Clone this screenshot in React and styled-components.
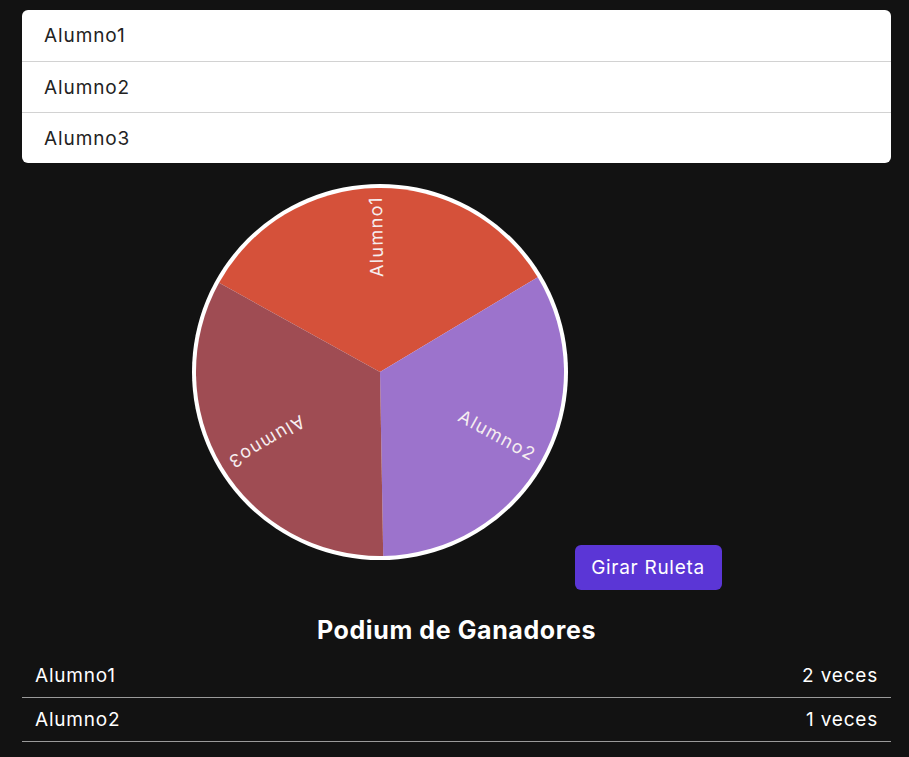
import React from 'react';
import styled, { createGlobalStyle } from 'styled-components';

const GlobalStyle = createGlobalStyle`
  body {
    margin: 0;
    background: #121212;
    font-family: Inter, "Open Sans", sans-serif;
  }
`;

const Page = styled.div`
  padding: 10px 18px 16px 22px;
  color: #fff;
`;

const StudentList = styled.ul`
  list-style: none;
  margin: 0;
  padding: 0;
  background: #fff;
  border-radius: 6px;
  overflow: hidden;
`;

const StudentItem = styled.li`
  box-sizing: border-box;
  height: 51px;
  display: flex;
  align-items: center;
  padding: 0 22px;
  font-size: 19px;
  letter-spacing: 0.9px;
  color: #222;
  border-top: ${({ first }) => (first ? 'none' : '1px solid #d2d2d2')};
`;

const Stage = styled.div`
  display: flex;
  justify-content: center;
  align-items: flex-end;
  gap: 7px;
  margin-top: 21px;
`;

const WheelBox = styled.div`
  width: 376px;
  height: 376px;
  margin-bottom: 30px;
  flex-shrink: 0;
`;

const SpinButton = styled.button`
  width: 147px;
  height: 45px;
  border: none;
  border-radius: 6px;
  background: #5b36d6;
  color: #fff;
  font-family: inherit;
  font-size: 19px;
  letter-spacing: 0.7px;
  cursor: pointer;
`;

const PodiumTitle = styled.h2`
  margin: 22px 0 6px;
  text-align: center;
  font-size: 25px;
  line-height: 36px;
  font-weight: 700;
  letter-spacing: 0.6px;
`;

const PodiumRow = styled.div`
  display: flex;
  justify-content: space-between;
  padding: 8px 13px;
  font-size: 19px;
  line-height: 27px;
  letter-spacing: 0.8px;
  border-bottom: 1.5px solid #9a9a9a;
`;

const students = [
  { name: 'Alumno1', color: '#d5513a' },
  { name: 'Alumno2', color: '#9c73cc' },
  { name: 'Alumno3', color: '#9f4c53' },
];

const podium = [
  { name: 'Alumno1', wins: 2 },
  { name: 'Alumno2', wins: 1 },
];

const Wheel = ({ items, size = 376, offset = 209 }) => {
  const c = size / 2;
  const r = c - 4;
  const step = 360 / items.length;
  const point = (deg) => {
    const a = (deg * Math.PI) / 180;
    return [c + r * Math.cos(a), c + r * Math.sin(a)];
  };

  return (
    <svg width={size} height={size} viewBox={`0 0 ${size} ${size}`}>
      <circle cx={c} cy={c} r={c} fill="#fff" />
      {items.map((item, i) => {
        const start = offset + i * step;
        const end = start + step;
        const mid = start + step / 2;
        const [x1, y1] = point(start);
        const [x2, y2] = point(end);
        return (
          <g key={item.name}>
            <path
              d={`M${c},${c} L${x1},${y1} A${r},${r} 0 0 1 ${x2},${y2} Z`}
              fill={item.color}
            />
            <text
              x={c + 176}
              y={c}
              transform={`rotate(${mid} ${c} ${c})`}
              textAnchor="end"
              dominantBaseline="middle"
              fill="#f6eef0"
              fontSize="18"
              letterSpacing="1.4"
              fontFamily="Inter, sans-serif"
            >
              {item.name}
            </text>
          </g>
        );
      })}
    </svg>
  );
};

const App = () => (
  <>
    <GlobalStyle />
    <Page>
      <StudentList>
        {students.map((s, i) => (
          <StudentItem key={s.name} first={i === 0}>
            {s.name}
          </StudentItem>
        ))}
      </StudentList>

      <Stage>
        <WheelBox>
          <Wheel items={students} />
        </WheelBox>
        <SpinButton>Girar Ruleta</SpinButton>
      </Stage>

      <PodiumTitle>Podium de Ganadores</PodiumTitle>
      {podium.map((p) => (
        <PodiumRow key={p.name}>
          <span>{p.name}</span>
          <span>{p.wins} veces</span>
        </PodiumRow>
      ))}
    </Page>
  </>
);

export default App;
